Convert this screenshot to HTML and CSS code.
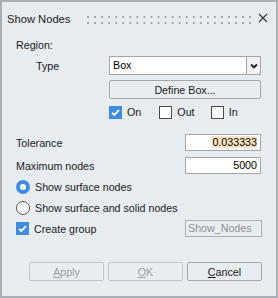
FILE: index.html
```
<!DOCTYPE html>
<html>
<head>
<meta charset="utf-8">
<link rel="stylesheet" href="styles.css">
</head>
<body>
<div class="win">
  <div class="titlebar">
    <span class="title">Show Nodes</span>
    <span class="grip"></span>
    <svg class="close" width="10" height="10" viewBox="0 0 10 10"><path d="M1 1 L9 9 M9 1 L1 9" stroke="#3a3a3a" stroke-width="1.2" fill="none"/></svg>
  </div>
  <div class="content">
    <div class="section-label">Region:</div>
    <div class="row type-row">
      <span class="lbl indent">Type</span>
      <div class="select">
        <span class="select-val">Box</span>
        <span class="select-btn"><svg width="8" height="6" viewBox="0 0 8 6"><path d="M1 1.5 L4 4.5 L7 1.5" stroke="#222" stroke-width="1.8" fill="none"/></svg></span>
      </div>
    </div>
    <div class="row right">
      <button class="btn wide">Define Box...</button>
    </div>
    <div class="row right">
      <div class="checks">
        <span class="chk-item"><span class="box checked"><svg width="13" height="13" viewBox="0 0 13 13"><path d="M3 6.8 L5.3 9 L10 4.2" stroke="#fff" stroke-width="1.8" fill="none"/></svg></span>On</span>
        <span class="chk-item"><span class="box"></span>Out</span>
        <span class="chk-item"><span class="box"></span>In</span>
      </div>
    </div>
    <div class="row tol-row">
      <span class="lbl">Tolerance</span>
      <div class="field"><span class="sel">0.033333</span></div>
    </div>
    <div class="row max-row">
      <span class="lbl">Maximum nodes</span>
      <div class="field">5000</div>
    </div>
    <div class="row radio-row first">
      <span class="radio on"></span><span class="lbl">Show surface nodes</span>
    </div>
    <div class="row radio-row">
      <span class="radio"></span><span class="lbl">Show surface and solid nodes</span>
    </div>
    <div class="row group-row">
      <span class="box checked"><svg width="13" height="13" viewBox="0 0 13 13"><path d="M3 6.8 L5.3 9 L10 4.2" stroke="#fff" stroke-width="1.8" fill="none"/></svg></span>
      <span class="lbl">Create group</span>
      <div class="field disabled">Show_Nodes</div>
    </div>
    <div class="row buttons">
      <button class="btn dlg" disabled><u>A</u>pply</button>
      <button class="btn dlg" disabled><u>O</u>K</button>
      <button class="btn dlg"><u>C</u>ancel</button>
    </div>
  </div>
</div>
</body>
</html>
```
FILE: styles.css
```
html, body {
  margin: 0;
  padding: 0;
  background: #e6ecf0;
}
body {
  font-family: "Liberation Sans", Arial, sans-serif;
  font-size: 10.7px;
  color: #1b1b1b;
}
.win {
  width: 278px;
  height: 298px;
  box-sizing: border-box;
  border: 2px solid #a9afb4;
  background: #e6ecf0;
  display: flex;
  flex-direction: column;
}
.titlebar {
  height: 32px;
  display: flex;
  align-items: center;
  padding: 0 8px 0 5px;
}
.title {
  font-size: 11.2px;
  color: #1b1b1b;
  margin-top: 2px;
}
.grip {
  flex: none;
  width: 164px;
  height: 8px;
  margin-left: 17px;
  margin-top: 3px;
  background-image: radial-gradient(circle, #9da3a8 0.9px, transparent 1.1px);
  background-size: 7.05px 6px;
  background-position: -2.5px -2px;
}
.close {
  margin-left: auto;
  margin-right: 0;
}
.content {
  padding: 0 15px 0 14px;
  display: flex;
  flex-direction: column;
}
.section-label {
  margin-top: 4px;
  height: 14px;
  line-height: 14px;
}
.row {
  display: flex;
  align-items: center;
}
.right {
  justify-content: flex-end;
}
.lbl {
  line-height: 14px;
}
.indent {
  margin-left: 20px;
}
.type-row {
  margin-top: 4px;
  justify-content: space-between;
}
.select {
  width: 152px;
  height: 19px;
  box-sizing: border-box;
  display: flex;
  background: #fff;
  border: 1px solid #a2a6aa;
}
.select-val {
  flex: 1;
  line-height: 17px;
  padding-left: 3px;
  color: #000;
}
.select-btn {
  width: 13px;
  border-left: 1px solid #a2a6aa;
  background: #f0f2f4;
  display: flex;
  align-items: center;
  justify-content: center;
}
.btn {
  font-family: "Liberation Sans", Arial, sans-serif;
  font-size: 10.7px;
  color: #1b1b1b;
  background: #e8edf1;
  border: 1px solid #a4a8ac;
  border-radius: 2px;
  height: 19px;
  padding: 0;
  box-sizing: border-box;
}
.btn.wide {
  width: 152px;
  margin-top: 5px;
}
.checks {
  width: 152px;
  margin-top: 7px;
  display: flex;
}
.chk-item {
  display: flex;
  align-items: center;
  width: 52px;
  line-height: 13px;
}
.chk-item:nth-child(2) {
  width: 53px;
}
.box {
  width: 13px;
  height: 13px;
  box-sizing: border-box;
  border: 1px solid #4a4a4a;
  background: #fff;
  margin-right: 5px;
  display: inline-block;
  flex: none;
}
.box.checked {
  border: none;
  background: #3f8de3;
}
.box svg {
  display: block;
}
.tol-row, .max-row {
  justify-content: space-between;
}
.tol-row {
  margin-top: 15px;
}
.max-row {
  margin-top: 6px;
}
.field {
  width: 76px;
  height: 17px;
  box-sizing: border-box;
  border: 1px solid #a2a6aa;
  background: #fff;
  text-align: right;
  line-height: 15px;
  padding-right: 3px;
  color: #000;
}
.sel {
  background: #fbe3c1;
}
.radio-row.first {
  margin-top: 6px;
}
.radio-row {
  margin-top: 7px;
}
.radio {
  width: 14px;
  height: 14px;
  border-radius: 50%;
  box-sizing: border-box;
  border: 1px solid #505050;
  background: #fff;
  margin-right: 5px;
  flex: none;
}
.radio.on {
  border: 4px solid #3f8de3;
  background: #fff;
}
.group-row {
  margin-top: 5px;
}
.group-row .lbl {
  flex: 1;
}
.field.disabled {
  width: 77px;
  background: #e8edf0;
  border-color: #acb0b3;
  color: #8d9094;
  text-align: left;
  padding-left: 2px;
  margin-right: -1px;
}
.buttons {
  margin-top: 25px;
  justify-content: flex-end;
  gap: 4px;
  margin-right: -1px;
}
.btn.dlg {
  width: 75px;
}
.btn:disabled {
  color: #9b9ea1;
  border-color: #c2c6c9;
}
u {
  text-decoration-thickness: 1px;
  text-underline-offset: 1px;
}
```
